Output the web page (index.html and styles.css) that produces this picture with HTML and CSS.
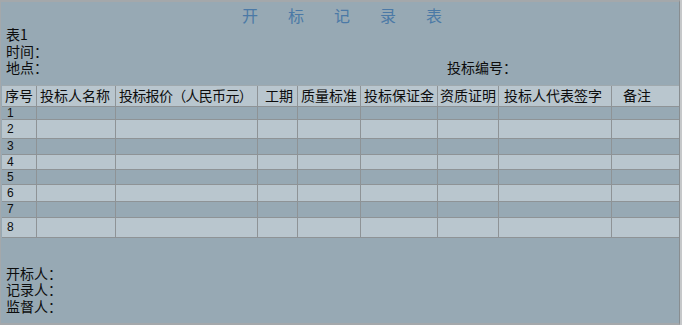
FILE: index.html
```html
<!DOCTYPE html>
<html lang="zh-CN">
<head>
<meta charset="utf-8">
<title>开标记录表</title>
<link rel="stylesheet" href="styles.css">
</head>
<body>
<div class="page">
  <h1 class="title"><span>开</span><span>标</span><span>记</span><span>录</span><span>表</span></h1>
  <div class="info">
    <div>表1</div>
    <div>时间：</div>
    <div class="info-row"><span class="place">地点：</span><span>投标编号：</span></div>
  </div>
  <div class="grid">
    <div class="row head">
      <div class="c">序号</div>
      <div class="c">投标人名称</div>
      <div class="c tight">投标报价（人民币元）</div>
      <div class="c p7">工期</div>
      <div class="c">质量标准</div>
      <div class="c">投标保证金</div>
      <div class="c p2">资质证明</div>
      <div class="c p5">投标人代表签字</div>
      <div class="c p11">备注</div>
    </div>
    <div class="row dark h12"><div class="c num">1</div><div class="c"></div><div class="c"></div><div class="c"></div><div class="c"></div><div class="c"></div><div class="c"></div><div class="c"></div><div class="c"></div></div>
    <div class="row light h18"><div class="c num">2</div><div class="c"></div><div class="c"></div><div class="c"></div><div class="c"></div><div class="c"></div><div class="c"></div><div class="c"></div><div class="c"></div></div>
    <div class="row dark h15"><div class="c num">3</div><div class="c"></div><div class="c"></div><div class="c"></div><div class="c"></div><div class="c"></div><div class="c"></div><div class="c"></div><div class="c"></div></div>
    <div class="row light h14"><div class="c num">4</div><div class="c"></div><div class="c"></div><div class="c"></div><div class="c"></div><div class="c"></div><div class="c"></div><div class="c"></div><div class="c"></div></div>
    <div class="row dark h14"><div class="c num">5</div><div class="c"></div><div class="c"></div><div class="c"></div><div class="c"></div><div class="c"></div><div class="c"></div><div class="c"></div><div class="c"></div></div>
    <div class="row light h16"><div class="c num">6</div><div class="c"></div><div class="c"></div><div class="c"></div><div class="c"></div><div class="c"></div><div class="c"></div><div class="c"></div><div class="c"></div></div>
    <div class="row dark h15"><div class="c num">7</div><div class="c"></div><div class="c"></div><div class="c"></div><div class="c"></div><div class="c"></div><div class="c"></div><div class="c"></div><div class="c"></div></div>
    <div class="row light h19"><div class="c num">8</div><div class="c"></div><div class="c"></div><div class="c"></div><div class="c"></div><div class="c"></div><div class="c"></div><div class="c"></div><div class="c"></div></div>
  </div>
  <div class="sign">
    <div>开标人：</div>
    <div>记录人：</div>
    <div>监督人：</div>
  </div>
</div>
</body>
</html>
```
FILE: styles.css
```css
html, body {
  margin: 0;
  padding: 0;
}
body {
  background: #c6c8ca;
  font-family: "Noto Sans CJK SC", "Noto Sans", sans-serif;
  color: #0d0d0d;
}
.page {
  box-sizing: border-box;
  width: 680px;
  height: 325px;
  background: #97a9b4;
  border-top: 2px solid #a4a8ab;
  border-left: 1px solid #a4a8ab;
  border-right: 1px solid #888d90;
  border-bottom: 2px solid #a4a8ab;
  overflow: hidden;
}
.title {
  margin: 0;
  padding-top: 3px;
  height: 21px;
  line-height: 21px;
  display: flex;
  justify-content: center;
  gap: 30px;
  font-size: 16px;
  font-weight: normal;
  color: #4b79a6;
  padding-left: 4px;
}
.info {
  padding-left: 5px;
  font-size: 14px;
  line-height: 16.5px;
}
.info-row {
  display: flex;
}
.place {
  width: 441px;
}
.grid {
  margin-top: 9px;
  margin-left: 1px;
  border-top: 1px solid #9fa9ae;
  width: 677px;
}
.row {
  display: grid;
  grid-template-columns: 34px 78px 141px 39px 62px 76px 60px 112px 67px;
  column-gap: 1px;
  background: #8e9396;
  border-bottom: 1px solid #8e9396;
}
.head {
  height: 20px;
}
.head .c {
  background: #b9c6ce;
  font-size: 14px;
  line-height: 19px;
  padding-left: 3px;
  white-space: nowrap;
  overflow: visible;
}
.head .tight {
  letter-spacing: -0.7px;
}
.head .p7 { padding-left: 7px; }
.head .p2 { padding-left: 2px; }
.head .p5 { padding-left: 5px; }
.head .p11 { padding-left: 11px; }
.c {
  overflow: hidden;
  min-width: 0;
}
.dark .c { background: #97a9b4; }
.light .c { background: #b9c6ce; }
.h12 { height: 12px; }
.h14 { height: 14px; }
.h15 { height: 15px; }
.h16 { height: 16px; }
.h18 { height: 18px; }
.h19 { height: 19px; }
.num {
  font-family: "Liberation Sans", Arial, sans-serif;
  font-size: 12px;
  padding-left: 5px;
  display: flex;
  align-items: center;
}
.sign {
  margin-top: 27px;
  padding-left: 5px;
  font-size: 14px;
  line-height: 16.5px;
}
```
